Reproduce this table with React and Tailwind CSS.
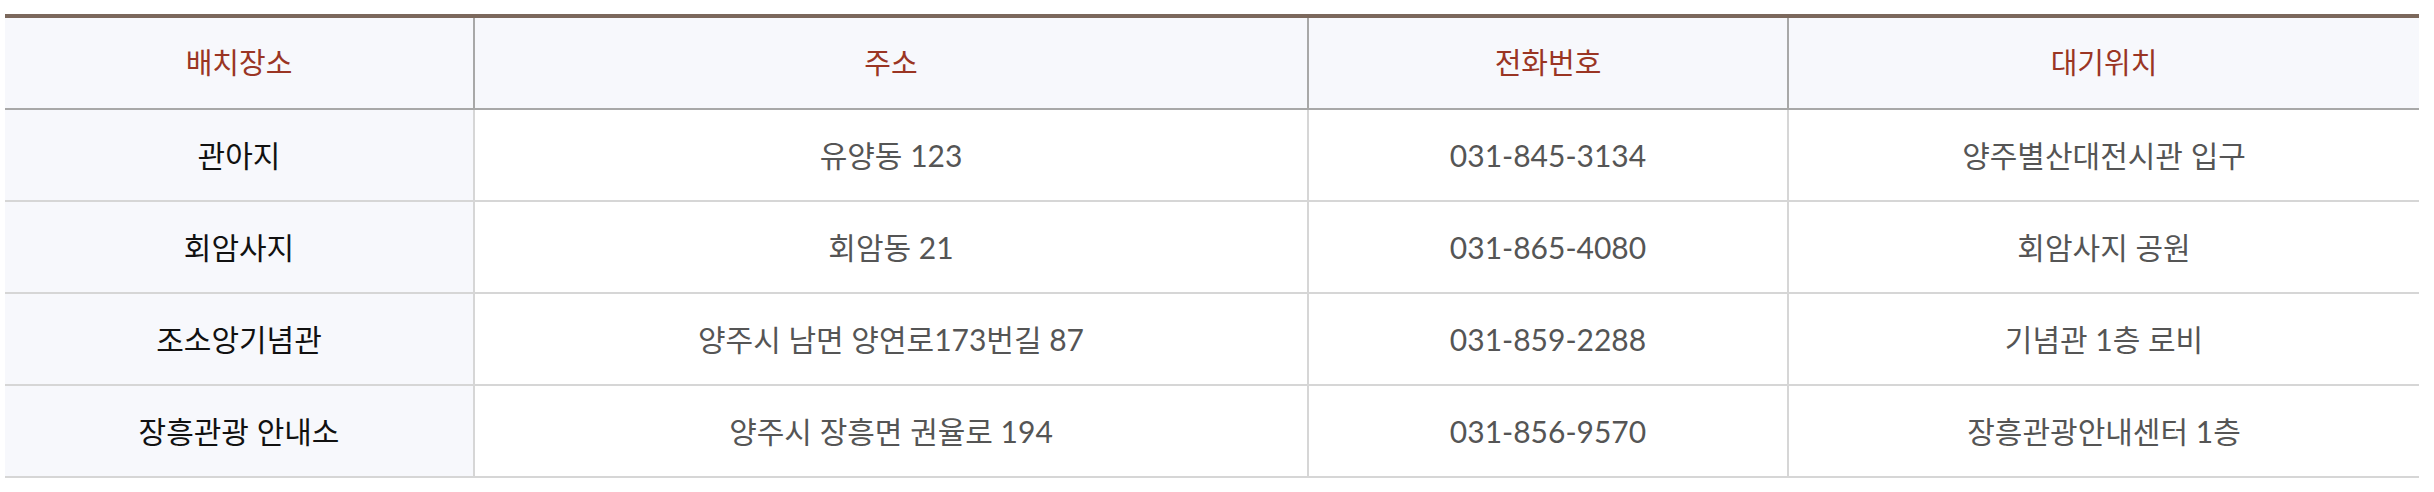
import React from 'react';

const rows = [
    { place: '관아지', addr: '유양동 123', tel: '031-845-3134', wait: '양주별산대전시관 입구' },
    { place: '회암사지', addr: '회암동 21', tel: '031-865-4080', wait: '회암사지 공원' },
    { place: '조소앙기념관', addr: '양주시 남면 양연로173번길 87', tel: '031-859-2288', wait: '기념관 1층 로비' },
    { place: '장흥관광 안내소', addr: '양주시 장흥면 권율로 194', tel: '031-856-9570', wait: '장흥관광안내센터 1층' },
];

const App = () => {
    return (
        <div className="w-[2434px] h-[492px] bg-white pt-[14px] pl-[5px] font-['Lato','Noto_Sans_CJK_KR',sans-serif]">
            <table className="w-[2414px] table-fixed border-separate border-spacing-0 border-t-4 border-[#7b685c]">
                <colgroup>
                    <col className="w-[470px]" />
                    <col className="w-[834px]" />
                    <col className="w-[480px]" />
                    <col className="w-[630px]" />
                </colgroup>
                <thead>
                    <tr className="bg-[#f7f8fc] text-[#9a3524] text-[29px]">
                        <th className="h-[92px] font-normal border-b-2 border-r-2 border-[#a8a8a8]">배치장소</th>
                        <th className="h-[92px] font-normal border-b-2 border-r-2 border-[#a8a8a8]">주소</th>
                        <th className="h-[92px] font-normal border-b-2 border-r-2 border-[#a8a8a8]">전화번호</th>
                        <th className="h-[92px] font-normal border-b-2 border-[#a8a8a8]">대기위치</th>
                    </tr>
                </thead>
                <tbody>
                    {rows.map((r) => (
                        <tr key={r.place} className="text-center text-[30px]">
                            <td className="h-[92px] bg-[#f7f8fc] text-[#111] border-b-2 border-r-2 border-[#d6d6d6]">{r.place}</td>
                            <td className="h-[92px] text-[#555] border-b-2 border-r-2 border-[#d6d6d6]">{r.addr}</td>
                            <td className="h-[92px] text-[#555] border-b-2 border-r-2 border-[#d6d6d6]">{r.tel}</td>
                            <td className="h-[92px] text-[#555] border-b-2 border-[#d6d6d6]">{r.wait}</td>
                        </tr>
                    ))}
                </tbody>
            </table>
        </div>
    );
};

export default App;
